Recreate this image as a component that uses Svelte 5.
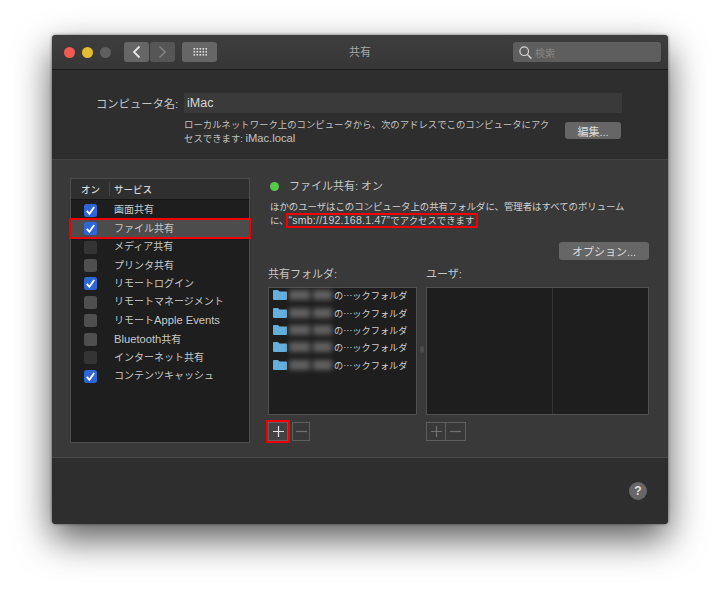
<script>
	const services = [
		{ name: '画面共有', on: true },
		{ name: 'ファイル共有', on: true, selected: true },
		{ name: 'メディア共有', on: false, dim: true },
		{ name: 'プリンタ共有', on: false },
		{ name: 'リモートログイン', on: true },
		{ name: 'リモートマネージメント', on: false },
		{ name: 'リモート', latin: 'Apple Events', on: false },
		{ name: '', latin: 'Bluetooth', after: '共有', on: false },
		{ name: 'インターネット共有', on: false, dim: true },
		{ name: 'コンテンツキャッシュ', on: true }
	]
	const folders = [1, 2, 3, 4, 5]
</script>

<div class="stage">
	<div class="window">
		<header class="titlebar">
			<div class="lights">
				<span class="light red"></span>
				<span class="light yellow"></span>
				<span class="light gray"></span>
			</div>
			<div class="nav">
				<span class="navbtn">
					<svg width="9" height="14" viewBox="0 0 9 14"><path d="M7.500 1.500 2 7l5.500 5.500" fill="none" stroke="#e6e6e6" stroke-width="1.800"/></svg>
				</span>
				<span class="navbtn off">
					<svg width="9" height="14" viewBox="0 0 9 14"><path d="M1.500 1.500 7 7l-5.500 5.500" fill="none" stroke="#828282" stroke-width="1.600"/></svg>
				</span>
			</div>
			<span class="navbtn grid">
				<svg width="14" height="10" viewBox="0 0 14 10" fill="#e2e2e2">
					{#each [0, 1, 2] as r}
						{#each [0, 1, 2, 3, 4] as c}
							<rect x={c * 3 + 0.5} y={r * 3 + 1} width="1.6" height="1.6" />
						{/each}
					{/each}
				</svg>
			</span>
			<span class="title">共有</span>
			<div class="search">
				<svg width="15" height="15" viewBox="0 0 15 15"><circle cx="6.200" cy="6.200" r="4.300" fill="none" stroke="#d4d4d4" stroke-width="1.200"/><path d="m9.400 9.400 4 4" stroke="#d4d4d4" stroke-width="1.400"/></svg>
				<span class="placeholder">検索</span>
			</div>
		</header>

		<section class="top">
			<div class="namerow">
				<span class="namelabel">コンピュータ名:</span>
				<div class="nameinput">iMac</div>
			</div>
			<div class="addr">
				<p>ローカルネットワーク上のコンピュータから、次のアドレスでこのコンピュータにアクセスできます: <span class="latin">iMac.local</span></p>
				<span class="btn edit">編集...</span>
			</div>
		</section>

		<section class="middle">
			<div class="services">
				<div class="thead">
					<span class="thon">オン</span>
					<span class="thname">サービス</span>
				</div>
				<div class="tbody">
					{#each services as s}
						<div class="row" class:selected={s.selected}>
							<span class="check" class:on={s.on} class:dim={s.dim}>
								{#if s.on}
									<svg width="13" height="13" viewBox="0 0 13 13"><path d="M2.800 6.800 5.400 9.800 10.200 3" fill="none" stroke="#fff" stroke-width="1.900"/></svg>
								{/if}
							</span>
							<span class="svcname">{s.name}{#if s.latin}<span class="latin">{s.latin}</span>{/if}{s.after ?? ''}</span>
							{#if s.selected}<span class="mark"></span>{/if}
						</div>
					{/each}
				</div>
			</div>

			<div class="detail">
				<div class="status">
					<span class="dot"></span>
					<span>ファイル共有: オン</span>
				</div>
				<p class="desc">ほかのユーザはこのコンピュータ上の共有フォルダに、管理者はすべてのボリューム<br />に、<span class="smb"><span class="url">“smb://192.168.1.47”</span>でアクセスできます</span></p>
				<div class="optrow"><span class="btn opt">オプション...</span></div>
				<div class="lists">
					<div class="col folders">
						<span class="collabel">共有フォルダ:</span>
						<div class="listbox">
							{#each folders as f}
								<div class="folder">
									<svg width="14" height="10" viewBox="0 0 14 10"><path d="M0 1a1 1 0 0 1 1-1h4l1.500 1.500H13a1 1 0 0 1 1 1V9a1 1 0 0 1-1 1H1a1 1 0 0 1-1-1z" fill="#64afdc"/></svg>
									<span class="blurred"><i></i><i class="short"></i></span>
									<span class="fname">の…ックフォルダ</span>
								</div>
							{/each}
						</div>
						<div class="plusminus">
							<span class="pm active">
								<svg width="13" height="13" viewBox="0 0 13 13"><path d="M6.500 1v11M1 6.500h11" stroke="#e2e2e2" stroke-width="1.200"/></svg>
								<span class="mark"></span>
							</span>
							<span class="pm minus">
								<svg width="13" height="13" viewBox="0 0 13 13"><path d="M1 6.500h11" stroke="#707070" stroke-width="1.200"/></svg>
							</span>
						</div>
					</div>
					<span class="splitter"></span>
					<div class="col users">
						<span class="collabel">ユーザ:</span>
						<div class="listbox userbox">
							<div class="ucol"></div>
							<div class="ucol"></div>
						</div>
						<div class="plusminus joined">
							<span class="pm">
								<svg width="13" height="13" viewBox="0 0 13 13"><path d="M6.500 1v11M1 6.500h11" stroke="#707070" stroke-width="1.200"/></svg>
							</span>
							<span class="pm">
								<svg width="13" height="13" viewBox="0 0 13 13"><path d="M1 6.500h11" stroke="#707070" stroke-width="1.200"/></svg>
							</span>
						</div>
					</div>
				</div>
			</div>
		</section>

		<footer class="bottom">
			<span class="help">?</span>
		</footer>
	</div>
</div>

<style>
	:global(body) {
		margin: 0;
		background: #fff;
	}

	.stage {
		width: 720px;
		height: 593px;
		padding: 35px 52px 0;
		box-sizing: border-box;
		overflow: hidden;
		font-family: "Liberation Sans", "Noto Sans CJK JP", sans-serif;
		-webkit-font-smoothing: antialiased;
	}

	.window {
		width: 616px;
		height: 489px;
		background: #2e2e2e;
		border-radius: 4px;
		box-shadow: 0 15px 36px rgba(0, 0, 0, .65), 0 0 3px rgba(0, 0, 0, .55);
		overflow: hidden;
		display: flex;
		flex-direction: column;
		color: #d0d0d0;
	}

	.titlebar {
		height: 35px;
		flex: none;
		box-sizing: border-box;
		display: flex;
		align-items: center;
		padding: 0 7px 0 12px;
		background: linear-gradient(#3e3e3e, #363636);
		border-bottom: 1px solid #1a1a1a;
		position: relative;
	}

	.lights {
		display: flex;
		gap: 7px;
	}

	.light {
		width: 11px;
		height: 11px;
		border-radius: 50%;
	}

	.red { background: #f25a52; }
	.yellow { background: #e4bb32; }
	.gray { background: #5f5f5f; }

	.nav {
		display: flex;
		gap: 1px;
		margin-left: 13px;
	}

	.navbtn {
		width: 25px;
		height: 20px;
		background: #666;
		border-radius: 3px;
		display: flex;
		align-items: center;
		justify-content: center;
	}

	.navbtn.off {
		background: #565656;
	}

	.navbtn.grid {
		width: 35px;
		margin-left: 7px;
	}

	.title {
		position: absolute;
		left: 297px;
		top: 9px;
		font-size: 11px;
		line-height: 16px;
		color: #a8a8a8;
	}

	.search {
		margin-left: auto;
		width: 148px;
		height: 20px;
		background: #5e5e5e;
		border-radius: 3px;
		display: flex;
		align-items: center;
		gap: 2px;
		padding-left: 5px;
		box-sizing: border-box;
	}

	.placeholder {
		font-size: 10px;
		color: #868686;
	}

	.top {
		height: 90px;
		flex: none;
		box-sizing: border-box;
		padding: 23px 46px 0 44px;
		background: #2e2e2e;
		border-bottom: 1px solid #434343;
	}

	.namerow {
		display: flex;
		align-items: center;
		gap: 6px;
	}

	.namelabel {
		font-size: 11.300px;
		color: #c6c6c6;
		white-space: nowrap;
		width: 82px;
		text-align: right;
	}

	.nameinput {
		width: 438px;
		height: 20px;
		background: #3a3a3a;
		box-sizing: border-box;
		padding-left: 3px;
		font-size: 12.500px;
		line-height: 20px;
		color: #d8d8d8;
	}

	.addr {
		display: flex;
		justify-content: space-between;
		align-items: flex-start;
		margin: 5px 1px 0 88px;
	}

	.addr p {
		margin: 0;
		width: 372px;
		font-size: 9.400px;
		line-height: 13.500px;
		color: #c2c2c2;
	}

	.latin {
		font-size: 11.200px;
	}

	.btn {
		background: #666;
		border-radius: 3px;
		color: #dcdcdc;
		display: flex;
		align-items: center;
		justify-content: center;
		white-space: nowrap;
		font-size: 11px;
	}

	.edit {
		width: 56px;
		height: 17px;
		margin-top: 4px;
	}

	.middle {
		height: 298px;
		flex: none;
		box-sizing: border-box;
		background: #393939;
		border-bottom: 1px solid #4a4a4a;
		padding: 18px 19px 0 18px;
		display: flex;
		gap: 18px;
	}

	.services {
		width: 180px;
		height: 265px;
		flex: none;
		box-sizing: border-box;
		border: 1px solid #4d4d4d;
		background: #1e1e1e;
		display: flex;
		flex-direction: column;
	}

	.thead {
		height: 21px;
		flex: none;
		box-sizing: border-box;
		background: #2f2f2f;
		border-bottom: 1px solid #161616;
		display: flex;
		align-items: center;
		font-size: 9.500px;
		font-weight: 500;
		color: #d6d6d6;
	}

	.thon {
		width: 39px;
		box-sizing: border-box;
		padding-left: 10px;
		border-right: 1px solid #454545;
	}

	.thname {
		padding-left: 4px;
	}

	.tbody {
		padding-top: 1px;
	}

	.row {
		height: 18.450px;
		display: flex;
		align-items: center;
		position: relative;
		padding-left: 13px;
	}

	.row.selected {
		background: #4c4c4c;
	}

	.mark {
		position: absolute;
		inset: -1px -2px;
		border: 2px solid #f00000;
		pointer-events: none;
	}

	.check {
		width: 13px;
		height: 13px;
		border-radius: 2.500px;
		background: #4f4f4f;
		display: flex;
		flex: none;
	}

	.check.dim {
		background: #343434;
	}

	.check.on {
		background: #2e66d8;
	}

	.svcname {
		margin-left: 17px;
		font-size: 10px;
		line-height: 14px;
		color: #c8c8c8;
		white-space: nowrap;
	}

	.detail {
		flex: 1;
		min-width: 0;
	}

	.status {
		display: flex;
		align-items: center;
		gap: 10px;
		font-size: 11px;
		line-height: 16px;
		color: #c6c6c6;
	}

	.dot {
		width: 9px;
		height: 9px;
		border-radius: 50%;
		background: #58c84c;
		margin-left: 2px;
	}

	.desc {
		margin: 6px 0 0 2px;
		font-size: 9.400px;
		line-height: 13.500px;
		color: #d0d0d0;
		white-space: nowrap;
	}

	.smb {
		outline: 2px solid #f00000;
		padding-right: 2px;
	}

	.url {
		font-size: 10.500px;
		letter-spacing: .25px;
	}

	.optrow {
		display: flex;
		justify-content: flex-end;
		margin-top: 15px;
	}

	.opt {
		width: 90px;
		height: 18px;
	}

	.lists {
		display: flex;
		margin-top: 5px;
	}

	.col {
		display: flex;
		flex-direction: column;
	}

	.folders {
		width: 149px;
	}

	.users {
		width: 223px;
	}

	.splitter {
		width: 9px;
		flex: none;
		position: relative;
	}

	.splitter::after {
		content: "";
		position: absolute;
		left: 3px;
		top: 81px;
		width: 4px;
		height: 7px;
		background: #4c4c4c;
		border-radius: 2px;
	}

	.collabel {
		font-size: 11px;
		line-height: 18px;
		color: #c6c6c6;
	}

	.listbox {
		margin-top: 4px;
		height: 128px;
		box-sizing: border-box;
		background: #1e1e1e;
		border: 1px solid #505050;
		padding: 0 0 0 4px;
	}

	.folder {
		height: 17.400px;
		box-sizing: border-box;
		padding-bottom: 3px;
		display: flex;
		align-items: center;
		font-size: 9.200px;
		color: #cfcfcf;
		white-space: nowrap;
	}

	.fname {
		font-family: "Noto Sans CJK JP", sans-serif;
	}

	.blurred {
		width: 45px;
		height: 10px;
		display: flex;
		gap: 3px;
		margin-left: 2px;
		filter: blur(2.500px);
		flex: none;
	}

	.blurred i {
		width: 21px;
		background: #606060;
	}

	.blurred .short {
		width: 19px;
	}

	.userbox {
		padding: 0;
		display: flex;
	}

	.ucol {
		width: 126px;
		flex: none;
		box-sizing: border-box;
		border-right: 1px solid #333;
	}

	.ucol:last-child {
		flex: 1;
		width: auto;
		border-right: 0;
	}

	.plusminus {
		display: flex;
		margin-top: 7px;
	}

	.pm {
		width: 20px;
		height: 19px;
		box-sizing: border-box;
		border: 1px solid #5e5e5e;
		display: flex;
		align-items: center;
		justify-content: center;
		position: relative;
	}

	.pm.active {
		background: #424242;
	}

	.pm.active .mark {
		inset: -3px;
		border-width: 2.500px;
	}

	.pm.minus {
		width: 18px;
		margin-left: 4px;
	}

	.joined .pm + .pm {
		border-left: 0;
	}

	.bottom {
		flex: 1;
		background: #2e2e2e;
		position: relative;
		display: flex;
		justify-content: flex-end;
		padding: 24px 21px 0 0;
		box-sizing: border-box;
	}

	.help {
		width: 18px;
		height: 18px;
		border-radius: 50%;
		background: #676767;
		color: #e0e0e0;
		font-size: 12px;
		font-weight: 700;
		line-height: 18px;
		text-align: center;
	}
</style>
